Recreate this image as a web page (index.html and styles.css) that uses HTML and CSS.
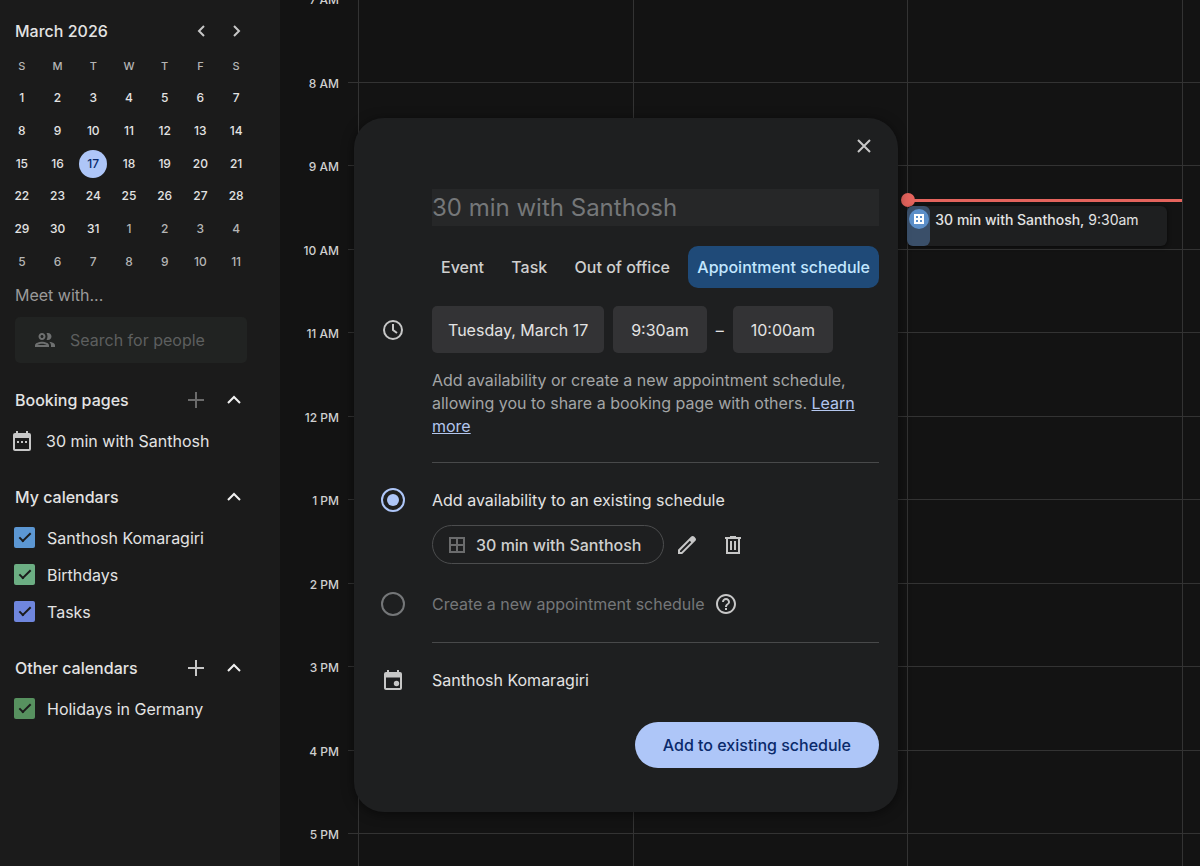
FILE: index.html
```html
<!DOCTYPE html>
<html lang="en">
<head>
    <title>Calendar</title>
    <meta charset="UTF-8">
    <meta name="viewport" content="width=device-width, initial-scale=1.0">
    <link rel="stylesheet" href="styles.css">
</head>
<body>
    <aside class="sidebar">
        <div class="month-header">
            <h2>March 2026</h2>
            <button type="button" class="icon-button" aria-label="Previous month">
                <svg width="20" height="20" viewBox="0 0 20 20"><path d="M12 5 7 10l5 5"/></svg>
            </button>
            <button type="button" class="icon-button" aria-label="Next month">
                <svg width="20" height="20" viewBox="0 0 20 20"><path d="m7 5 5 5-5 5"/></svg>
            </button>
        </div>

        <table class="mini-month">
            <thead>
                <tr><th>S</th><th>M</th><th>T</th><th>W</th><th>T</th><th>F</th><th>S</th></tr>
            </thead>
            <tbody>
                <tr><td>1</td><td>2</td><td>3</td><td>4</td><td>5</td><td>6</td><td>7</td></tr>
                <tr><td>8</td><td>9</td><td>10</td><td>11</td><td>12</td><td>13</td><td>14</td></tr>
                <tr><td>15</td><td>16</td><td><span class="today">17</span></td><td>18</td><td>19</td><td>20</td><td>21</td></tr>
                <tr><td>22</td><td>23</td><td>24</td><td>25</td><td>26</td><td>27</td><td>28</td></tr>
                <tr><td>29</td><td>30</td><td>31</td><td class="other">1</td><td class="other">2</td><td class="other">3</td><td class="other">4</td></tr>
                <tr><td class="other">5</td><td class="other">6</td><td class="other">7</td><td class="other">8</td><td class="other">9</td><td class="other">10</td><td class="other">11</td></tr>
            </tbody>
        </table>

        <label class="meet-label" for="people">Meet with...</label>
        <div class="search-box">
            <svg width="24" height="24" viewBox="0 0 24 24"><path d="M9 13.750c-2.340 0-7 1.170-7 3.500V19h14v-1.750c0-2.330-4.660-3.500-7-3.500zM4.340 17c.840-.580 2.870-1.250 4.660-1.250s3.820.670 4.660 1.250H4.340zM9 12c1.930 0 3.500-1.570 3.500-3.500S10.930 5 9 5 5.500 6.570 5.500 8.500 7.070 12 9 12zm0-5c.830 0 1.500.670 1.500 1.500S9.830 10 9 10s-1.500-.670-1.500-1.500S8.170 7 9 7zm7.040 6.810c1.160.840 1.960 1.960 1.960 3.440V19h4v-1.750c0-2.020-3.500-3.170-5.960-3.440zM15 12c1.930 0 3.500-1.570 3.500-3.500S16.930 5 15 5c-.540 0-1.040.130-1.500.350.630.890 1 1.980 1 3.150s-.370 2.260-1 3.150c.460.220.960.350 1.500.350z"/></svg>
            <input type="text" id="people" placeholder="Search for people">
        </div>

        <section class="group">
            <div class="group-header">
                <h3>Booking pages</h3>
                <button type="button" class="icon-button dim" aria-label="Add booking page">
                    <svg width="20" height="20" viewBox="0 0 20 20"><path d="M10 2v16M2 10h16"/></svg>
                </button>
                <button type="button" class="icon-button" aria-label="Collapse booking pages">
                    <svg width="20" height="20" viewBox="0 0 20 20"><path class="bright" d="m4 13 6-6 6 6"/></svg>
                </button>
            </div>
            <a class="group-item" href="#">
                <svg class="solid" width="24" height="24" viewBox="0 0 24 24"><path d="M19 4h-1V2h-2v2H8V2H6v2H5a2 2 0 0 0-2 2v14c0 1.100.9 2 2 2h14a2 2 0 0 0 2-2V6a2 2 0 0 0-2-2zm0 16H5V9h14v11zM7 12h2v2H7zm4 0h2v2h-2zm4 0h2v2h-2z"/></svg>
                30 min with Santhosh
            </a>
        </section>

        <section class="group">
            <div class="group-header">
                <h3>My calendars</h3>
                <button type="button" class="icon-button" aria-label="Collapse my calendars">
                    <svg width="20" height="20" viewBox="0 0 20 20"><path class="bright" d="m4 13 6-6 6 6"/></svg>
                </button>
            </div>
            <label class="group-item"><input type="checkbox" class="blue" checked>Santhosh Komaragiri</label>
            <label class="group-item"><input type="checkbox" class="mint" checked>Birthdays</label>
            <label class="group-item"><input type="checkbox" class="indigo" checked>Tasks</label>
        </section>

        <section class="group">
            <div class="group-header">
                <h3>Other calendars</h3>
                <button type="button" class="icon-button" aria-label="Add other calendars">
                    <svg width="20" height="20" viewBox="0 0 20 20"><path d="M10 2v16M2 10h16"/></svg>
                </button>
                <button type="button" class="icon-button" aria-label="Collapse other calendars">
                    <svg width="20" height="20" viewBox="0 0 20 20"><path class="bright" d="m4 13 6-6 6 6"/></svg>
                </button>
            </div>
            <label class="group-item"><input type="checkbox" class="green" checked>Holidays in Germany</label>
        </section>
    </aside>

    <main class="week">
        <div class="hours">
            <div class="hour"><span>7 AM</span></div>
            <div class="hour"><span>8 AM</span></div>
            <div class="hour"><span>9 AM</span></div>
            <div class="hour"><span>10 AM</span></div>
            <div class="hour"><span>11 AM</span></div>
            <div class="hour"><span>12 PM</span></div>
            <div class="hour"><span>1 PM</span></div>
            <div class="hour"><span>2 PM</span></div>
            <div class="hour"><span>3 PM</span></div>
            <div class="hour"><span>4 PM</span></div>
            <div class="hour"><span>5 PM</span></div>
        </div>

        <div class="days">
            <div class="day"></div>
            <div class="day"></div>
            <div class="day">
                <div class="now-line"></div>
                <div class="event">
                    <div class="event-stripe">
                        <svg width="20" height="20" viewBox="0 0 20 20"><circle cx="10" cy="10" r="10"/><path d="M6 6h8v8H6zM10 6v8M6 10h8"/></svg>
                    </div>
                    <p><strong>30 min with Santhosh,</strong> 9:30am</p>
                </div>
            </div>
        </div>

        <form class="dialog" role="dialog" aria-label="New appointment schedule">
            <button type="button" class="icon-button close" aria-label="Close">
                <svg width="20" height="20" viewBox="0 0 20 20"><path d="m4 4 12 12M16 4 4 16"/></svg>
            </button>

            <input type="text" class="title" aria-label="Title" placeholder="30 min with Santhosh">

            <div class="tabs">
                <button type="button">Event</button>
                <button type="button">Task</button>
                <button type="button">Out of office</button>
                <button type="button" class="active">Appointment schedule</button>
            </div>

            <div class="row">
                <svg class="row-icon" width="24" height="24" viewBox="0 0 24 24"><circle cx="12" cy="12" r="9"/><path d="M12 6v6l4 3"/></svg>
                <div class="times">
                    <button type="button" class="date">Tuesday, March 17</button>
                    <button type="button">9:30am</button>
                    <span>–</span>
                    <button type="button">10:00am</button>
                </div>
            </div>

            <p class="hint">Add availability or create a new appointment schedule, allowing you to share a booking page with others. <a href="#">Learn more</a></p>

            <hr>

            <div class="row option">
                <input type="radio" name="schedule" id="existing" checked>
                <label for="existing">Add availability to an existing schedule</label>
            </div>
            <div class="schedule">
                <button type="button" class="chip">
                    <svg width="18" height="18" viewBox="0 0 18 18"><path d="M2 2h14v14H2zM9 2v14M2 9h14"/></svg>
                    30 min with Santhosh
                </button>
                <button type="button" class="icon-button" aria-label="Edit">
                    <svg class="solid" width="24" height="24" viewBox="0 0 24 24"><path d="M20.410 4.940l-1.350-1.350c-.780-.780-2.050-.780-2.830 0L3 16.820V21h4.180L20.410 7.770c.790-.780.790-2.050 0-2.830zM6.410 19.060 5 19v-1.360l9.820-9.820 1.410 1.410-9.820 9.830z"/></svg>
                </button>
                <button type="button" class="icon-button" aria-label="Delete">
                    <svg class="solid" width="24" height="24" viewBox="0 0 24 24"><path fill-rule="evenodd" d="M15 4V3H9v1H4v2h1v15h14V6h1V4h-5zm2 15H7V6h10v13zM9 8h2v9H9zm4 0h2v9h-2z"/></svg>
                </button>
            </div>
            <div class="row option">
                <input type="radio" name="schedule" id="create">
                <label for="create" class="muted">Create a new appointment schedule</label>
                <button type="button" class="icon-button help" aria-label="Help">
                    <svg class="solid" width="24" height="24" viewBox="0 0 24 24"><path d="M11 18h2v-2h-2v2zm1-16C6.480 2 2 6.480 2 12s4.480 10 10 10 10-4.480 10-10S17.520 2 12 2zm0 18c-4.410 0-8-3.590-8-8s3.590-8 8-8 8 3.590 8 8-3.590 8-8 8zm0-14c-2.210 0-4 1.790-4 4h2c0-1.100.9-2 2-2s2 .9 2 2c0 2-3 1.750-3 5h2c0-2.250 3-2.500 3-5 0-2.210-1.790-4-4-4z"/></svg>
                </button>
            </div>

            <hr>

            <div class="row owner">
                <svg class="row-icon solid" width="24" height="24" viewBox="0 0 24 24"><path d="M19 4h-1V2h-2v2H8V2H6v2H5a2 2 0 0 0-2 2v14c0 1.100.9 2 2 2h14a2 2 0 0 0 2-2V6a2 2 0 0 0-2-2zm0 16H5V9.500h14V20z"/><circle cx="15.500" cy="15.500" r="2.700"/></svg>
                <span>Santhosh Komaragiri</span>
            </div>

            <button type="submit" class="primary">Add to existing schedule</button>
        </form>
    </main>
</body>
</html>
```
FILE: styles.css
```css
:root {
    --page: #131313;
    --sidebar: #1b1b1b;
    --surface: #1e1f20;
    --field: #333335;
    --line: #333333;
    --text: #e3e3e3;
    --icon: #c7c7c7;
    --muted: #757779;
    --accent: #aec6f8;
}

* {
    margin: 0;
    padding: 0;
    box-sizing: border-box;
}

body {
    display: flex;
    min-height: 100vh;
    background-color: var(--page);
    color: var(--text);
    font-family: "Google Sans Text", Inter, Roboto, sans-serif;
    font-size: 16px;
    line-height: 24px;
}

button,
input {
    font: inherit;
    color: inherit;
    background: none;
    border: none;
    outline: none;
}

button {
    cursor: pointer;
}

svg {
    display: block;
    flex: none;
    fill: none;
    stroke: var(--icon);
    stroke-width: 2;
}

svg.solid,
.search-box svg {
    fill: var(--icon);
    stroke: none;
}

.icon-button {
    display: flex;
    align-items: center;
    justify-content: center;
}

.dim svg {
    stroke: #6b6b6b;
}

.bright {
    stroke: #f0f0f0;
}

/* Sidebar */
.sidebar {
    flex: none;
    width: 280px;
    padding: 19px 33px 24px 15px;
    background-color: var(--sidebar);
}

.month-header,
.group-header {
    display: flex;
    align-items: center;
}

.month-header {
    gap: 15px;
}

h2,
h3 {
    flex: 1;
    font-size: 16px;
    font-weight: 500;
}

.mini-month {
    width: 250px;
    height: 228px;
    margin: 7px 0 5px -11px;
    border-collapse: collapse;
    table-layout: fixed;
    font-size: 12px;
    line-height: 16px;
    text-align: center;
}

.mini-month th,
.mini-month td {
    height: 32px;
    font-weight: 500;
}

.mini-month th {
    font-size: 11px;
    color: #b5b5b5;
}

.mini-month .other {
    color: #b5b5b5;
}

.today {
    display: block;
    width: 28px;
    margin: 0 auto;
    border-radius: 50%;
    background-color: var(--accent);
    color: #0a2a6b;
    line-height: 28px;
}

.meet-label {
    display: block;
    color: #9a9a9a;
}

.search-box {
    display: flex;
    align-items: center;
    gap: 13px;
    height: 46px;
    margin: 10px 0 25px;
    padding: 0 18px;
    border-radius: 5px;
    background-color: #212322;
}

.search-box svg {
    fill: #6e7070;
}

.search-box input {
    flex: 1;
    min-width: 0;
}

.search-box input::placeholder {
    color: #5d5f5f;
    opacity: 1;
}

.group {
    margin-bottom: 26px;
}

.group-header {
    gap: 18px;
    margin-bottom: 10px;
    padding-right: 3px;
}

.group-item {
    display: flex;
    align-items: center;
    gap: 12px;
    height: 37px;
    margin-left: -1px;
    color: var(--text);
    text-decoration: none;
}

a.group-item {
    margin-left: -5px;
}

input[type="checkbox"] {
    display: flex;
    align-items: center;
    justify-content: center;
    width: 21px;
    height: 21px;
    appearance: none;
    border-radius: 2px;
}

input[type="checkbox"]:checked::after {
    content: "";
    width: 10px;
    height: 4px;
    border: solid var(--sidebar);
    border-width: 0 0 2px 2px;
    transform: translateY(-2px) rotate(-45deg);
}

.blue { background-color: #5c97d3; }
.mint { background-color: #6cae83; }
.indigo { background-color: #6f86dd; }
.green { background-color: #57915f; }

/* Day grid */
.week {
    position: relative;
    display: grid;
    flex: 1;
    overflow: hidden;
}

.hours,
.days {
    grid-area: 1 / 1;
}

.hours {
    display: grid;
    grid-template-rows: repeat(10, 1fr) 33px;
    margin-top: -2px;
}

.hour {
    margin-left: 68px;
    border-top: 1px solid var(--line);
}

.hour span {
    display: block;
    width: 59px;
    margin: -7px 0 0 -68px;
    font-size: 12px;
    font-weight: 500;
    line-height: 16px;
    text-align: right;
    color: #cfcfcf;
}

.days {
    display: grid;
    grid-template-columns: repeat(3, 1fr);
    margin: 0 17px 0 78px;
    border-right: 1px solid var(--line);
}

.day {
    position: relative;
    border-left: 1px solid var(--line);
}

.now-line {
    position: absolute;
    top: 199px;
    left: 0;
    right: 0;
    height: 3px;
    background-color: #e5645d;
}

.now-line::before {
    content: "";
    position: absolute;
    top: -6px;
    left: -7px;
    width: 14px;
    height: 14px;
    border-radius: 50%;
    background-color: #e5645d;
}

.event {
    position: absolute;
    top: 206px;
    left: -1px;
    right: 15px;
    display: flex;
    gap: 5px;
    height: 40px;
    border-radius: 6px;
    background-color: var(--surface);
    box-shadow: 0 1px 4px rgba(0, 0, 0, 0.6);
    font-size: 14px;
    line-height: 27px;
}

.event-stripe {
    flex: none;
    width: 23px;
    padding: 3px 2px;
    border-radius: 6px;
    background-color: #3a4f69;
}

.event-stripe circle {
    fill: #5c8fc9;
    stroke: none;
}

.event-stripe path {
    stroke: #ffffff;
}

.event strong {
    font-weight: 500;
}

/* Appointment dialog */
.dialog {
    position: absolute;
    top: 118px;
    left: 74px;
    width: 544px;
    padding: 16px 19px 44px 78px;
    border-radius: 30px;
    background-color: var(--surface);
    box-shadow: 0 2px 12px rgba(0, 0, 0, 0.5);
}

.close {
    width: 24px;
    height: 24px;
    margin: 0 3px 31px auto;
}

.title {
    display: block;
    width: 100%;
    height: 37px;
    background-color: #262728;
    font-size: 24px;
}

.title::placeholder {
    color: var(--muted);
    opacity: 1;
}

.tabs {
    display: flex;
    justify-content: space-between;
    margin: 20px 0 18px;
}

.tabs button {
    height: 42px;
    padding: 0 9px;
    border-radius: 10px;
    color: #cfcfcf;
    font-weight: 500;
}

.tabs .active {
    background-color: #1f4a78;
    color: #c2e7ff;
}

.row {
    display: flex;
    align-items: center;
}

.row-icon,
.row input {
    margin-left: -51px;
}

.row-icon {
    margin-right: 27px;
}

.times {
    display: flex;
    align-items: center;
    gap: 9px;
}

.times button {
    height: 47px;
    padding: 0 18px;
    border-radius: 5px;
    background-color: var(--field);
}

.times .date {
    padding: 0 16px;
}

.hint {
    margin: 16px 0 24px;
    line-height: 23px;
    color: #a3a5a6;
}

.hint a {
    color: #b3c6ee;
}

hr {
    border: none;
    border-top: 1px solid #48494a;
}

.option {
    height: 24px;
    margin-top: 25px;
}

input[type="radio"] {
    flex: none;
    width: 24px;
    height: 24px;
    margin-right: 27px;
    appearance: none;
    border: 2px solid #757779;
    border-radius: 50%;
}

input[type="radio"]:checked {
    padding: 4px;
    border-color: var(--accent);
    background: var(--accent) content-box;
}

.muted {
    color: var(--muted);
}

.schedule {
    display: flex;
    align-items: center;
    margin: 13px 0 28px;
}

.schedule .icon-button {
    margin: 0 11px;
}

.chip {
    display: flex;
    align-items: center;
    gap: 10px;
    height: 39px;
    padding: 0 22px 0 15px;
    border: 1px solid #4c4d4e;
    border-radius: 20px;
    color: #cfcfcf;
    font-weight: 500;
}

.chip svg {
    stroke: #6b6c6d;
}

.schedule + .option {
    margin: 0 0 26px;
}

.help {
    margin-left: 9px;
}

.owner {
    margin: 25px 0 30px;
}

.primary {
    display: block;
    height: 46px;
    margin-left: auto;
    padding: 0 28px;
    border-radius: 23px;
    background-color: var(--accent);
    color: #0a2a6b;
    font-weight: 500;
}
```
